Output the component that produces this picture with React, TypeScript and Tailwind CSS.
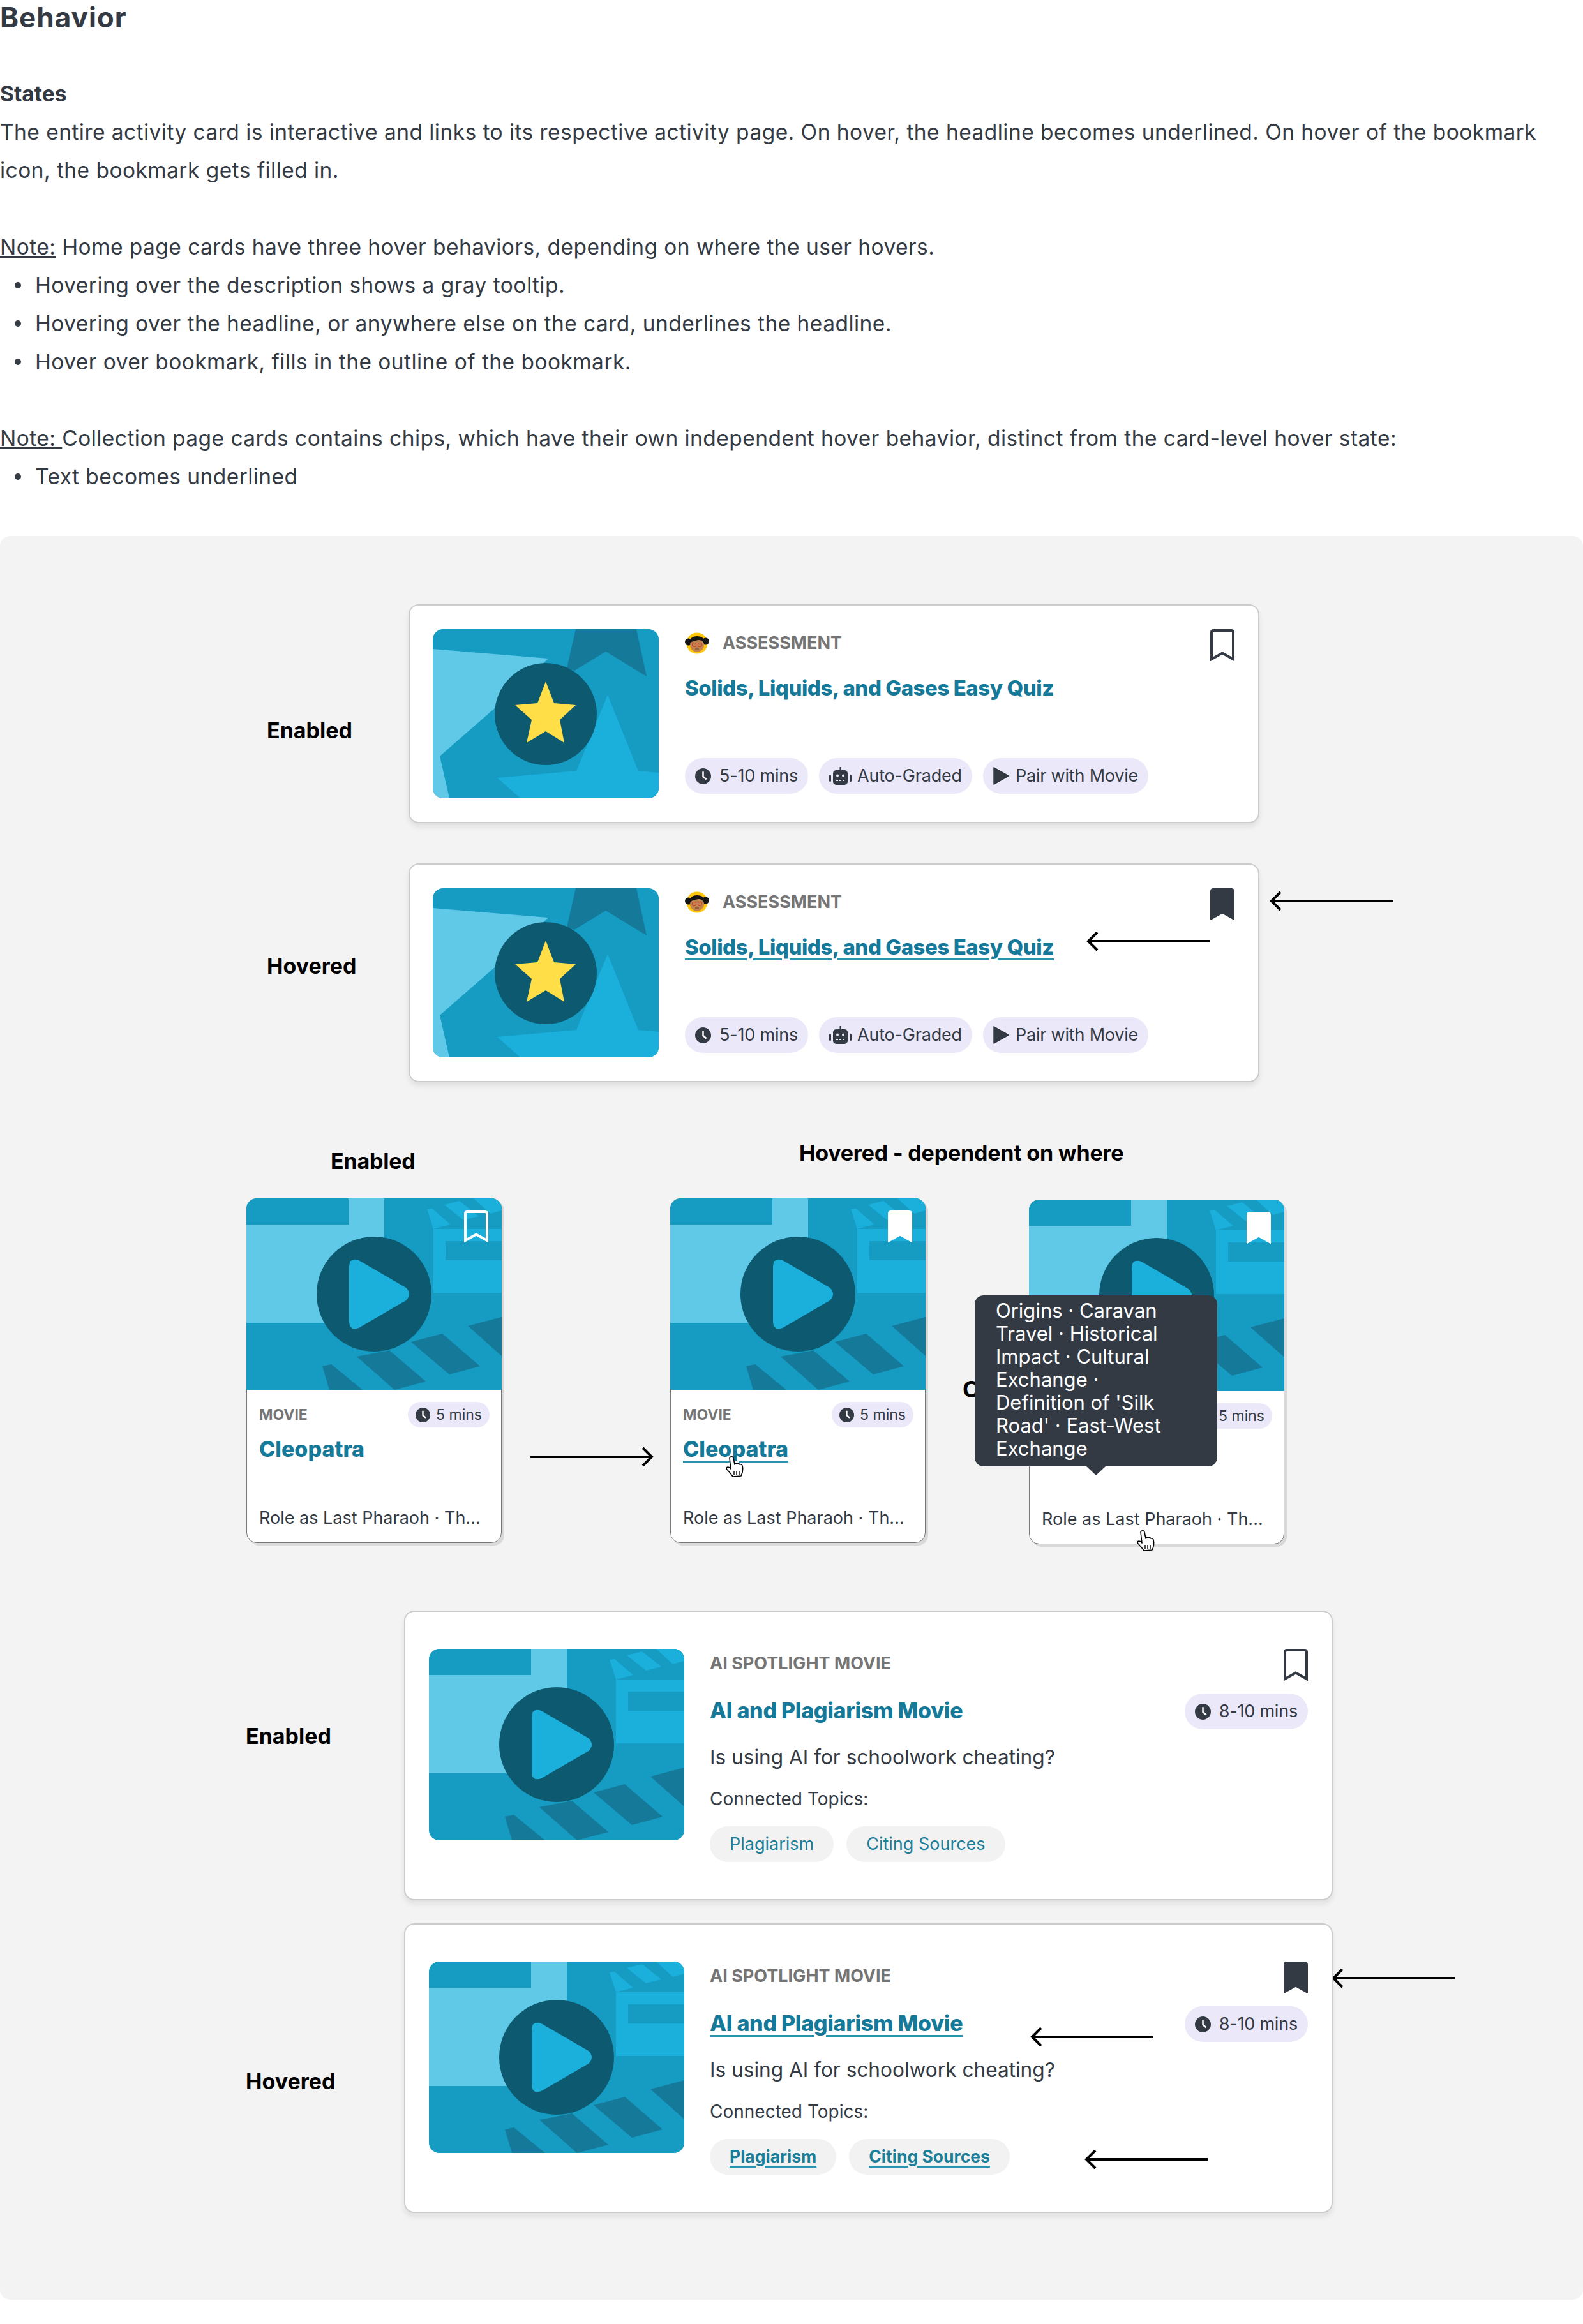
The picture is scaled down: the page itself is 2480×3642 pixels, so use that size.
import React from "react";

const dark = "#343a43";

function Bookmark({ color, filled, className }: { color: string; filled?: boolean; className?: string }) {
  return (
    <svg viewBox="0 0 38 50" className={className ?? "w-[38px] h-[50px]"}>
      <path
        d="M2 5 Q2 2 5 2 H33 Q36 2 36 5 V47 L19 37.5 L2 47 Z"
        fill={filled ? color : "none"}
        stroke={color}
        strokeWidth="4"
      />
    </svg>
  );
}

function Clock({ className }: { className?: string }) {
  return (
    <svg viewBox="0 0 24 24" className={className ?? "w-[25px] h-[25px]"}>
      <circle cx="12" cy="12" r="12" fill={dark} />
      <path d="M10.8 5 V13.2 L16.2 17.6 L17.8 15.6 L13.2 12 V5 Z" fill="#ffffff" />
    </svg>
  );
}

function Robot() {
  return (
    <svg viewBox="0 0 35 28" className="w-[35px] h-[28px]">
      <rect x="16.5" y="0" width="2.5" height="6" fill={dark} />
      <rect x="6" y="5" width="23" height="23" rx="5" fill={dark} />
      <rect x="0" y="12" width="3" height="11" rx="1.5" fill={dark} />
      <rect x="32" y="12" width="3" height="11" rx="1.5" fill={dark} />
      <circle cx="13" cy="13.5" r="2" fill="#ebe8fa" />
      <circle cx="22" cy="13.5" r="2" fill="#ebe8fa" />
      <rect x="11" y="20" width="3" height="2" fill="#ebe8fa" />
      <rect x="16" y="20" width="3" height="2" fill="#ebe8fa" />
      <rect x="21" y="20" width="3" height="2" fill="#ebe8fa" />
    </svg>
  );
}

function PlaySmall() {
  return (
    <svg viewBox="0 0 25 28" className="w-[25px] h-7">
      <path d="M1 1 L24 14 L1 27 Z" fill={dark} stroke={dark} strokeWidth="1.5" strokeLinejoin="round" />
    </svg>
  );
}

function Avatar() {
  return (
    <svg viewBox="0 0 38 34" className="w-[38px] h-[34px]">
      <circle cx="19" cy="17" r="16.5" fill="#ffc60a" />
      <circle cx="5.5" cy="15" r="5.5" fill="#141414" />
      <circle cx="32.5" cy="14" r="5.5" fill="#141414" />
      <ellipse cx="19" cy="20" rx="11" ry="10.5" fill="#c08350" />
      <path d="M7 18 Q7 6 19 6 Q31 6 31 17 Q25 10 17 13 Q10 14 7 18 Z" fill="#141414" />
      <circle cx="14.5" cy="19.5" r="3.3" fill="none" stroke="#d13f2b" strokeWidth="1" />
      <circle cx="23.5" cy="19.5" r="3.3" fill="none" stroke="#d13f2b" strokeWidth="1" />
      <path d="M16 26 H22" stroke="#6b3a1e" strokeWidth="1" />
    </svg>
  );
}

function Arrow({ className }: { className?: string }) {
  return (
    <svg viewBox="0 0 193 30" className={className ?? "w-[193px] h-[30px]"}>
      <path d="M193 15 H3 M17 1 L3 15 L17 29" fill="none" stroke="#000000" strokeWidth="4" />
    </svg>
  );
}

function Hand({ className }: { className: string }) {
  return (
    <svg viewBox="0 0 30 34" className={className}>
      <path
        d="M9 2 Q12 1 13 4 L15 14 Q17 11 19 13 Q21 11 23 14 Q26 13 27 16 Q29 24 25 32 L12 33 Q9 28 3 22 Q1 19 4 18 Q7 18 9 21 L7 4 Q7 3 9 2 Z"
        fill="#ffffff"
        stroke="#000000"
        strokeWidth="1.6"
        strokeLinejoin="round"
      />
      <path d="M14 24 V30 M18 24 V30 M22 24 V30" stroke="#000000" strokeWidth="1.4" />
    </svg>
  );
}

function StarThumb() {
  return (
    <svg viewBox="0 0 354 265" className="w-[354px] h-[265px] rounded-2xl shrink-0">
      <rect width="354" height="265" fill="#169bc2" />
      <polygon points="0,31 181,46 97,124 11,199 26,265 0,265" fill="#61c9e8" />
      <polygon points="224,0 319,0 335,74 271,35 222,65 210,61" fill="#15799a" />
      <polygon points="274,103 322,222 354,225 354,265 137,265 101,233 225,222" fill="#1bafdc" />
      <circle cx="177" cy="133" r="80" fill="#0d5a70" />
      <polygon
        points="177,82 190,116 224,119 199,142 206,178 177,160 147,178 155,142 129,119 164,116"
        fill="#ffde47"
      />
    </svg>
  );
}

function MovieThumb({ className }: { className: string }) {
  return (
    <svg viewBox="0 0 400 300" className={className}>
      <rect width="400" height="300" fill="#169bc2" />
      <polygon points="160,0 216,0 216,195 0,195 0,41 160,41" fill="#61c9e8" />
      <rect x="293" y="48" width="107" height="100" fill="#1bafdc" />
      <rect x="312" y="67" width="88" height="30" fill="#169bc2" />
      <polygon points="283,17 291,16 320,41 293,48" fill="#1bafdc" />
      <polygon points="310,10 334,4 364,28 340,34" fill="#1bafdc" />
      <polygon points="356,0 400,0 400,19 382,24" fill="#1bafdc" />
      <polygon points="119,263 133,260 182,300 130,300" fill="#15799a" />
      <polygon points="173,248 224,238 281,287 232,300" fill="#15799a" />
      <polygon points="258,225 307,212 366,263 318,276" fill="#15799a" />
      <polygon points="347,200 400,186 400,247" fill="#15799a" />
      <circle cx="200" cy="150" r="90" fill="#0d5a70" />
      <path
        d="M161 107 Q161 92 176 97 L250 140 Q260 150 250 160 L176 203 Q161 208 161 193 Z"
        fill="#1bafdc"
      />
    </svg>
  );
}

function Chip({ icon, label, gap }: { icon: React.ReactNode; label: string; gap: string }) {
  return (
    <div className={`h-14 rounded-full bg-[#ebe8fa] px-4 flex items-center text-[27px] tracking-[-0.2px] text-[#343a43] ${gap}`}>
      {icon}
      <span>{label}</span>
    </div>
  );
}

function AssessmentCard({ hovered }: { hovered?: boolean }) {
  return (
    <div className="relative w-[1333px] h-[343px] rounded-2xl bg-white border-2 border-[#cccccc] shadow-[0_6px_8px_rgba(0,0,0,0.08)] pl-[36px] pt-[37px] pr-[37px] flex gap-[41px]">
      <StarThumb />
      <div className="flex-1">
        <div className="h-[50px] flex justify-between items-start">
          <div className="flex items-center gap-[21px] h-[43px] text-[27px] font-bold text-[#757575]">
            <Avatar />
            <span className="pt-[2px]">ASSESSMENT</span>
          </div>
          <Bookmark color={dark} filled={hovered} />
        </div>
        <div
          className={`mt-5 h-11 leading-[44px] text-[33px] tracking-[-0.45px] font-extrabold text-[#15799a] ${
            hovered ? "underline decoration-[#2a93ad] decoration-[3px] underline-offset-[6px]" : ""
          }`}
        >
          Solids, Liquids, and Gases Easy Quiz
        </div>
        <div className="mt-[88px] flex gap-[17px]">
          <Chip icon={<Clock />} label="5-10 mins" gap="gap-[13px]" />
          <Chip icon={<Robot />} label="Auto-Graded" gap="gap-[9px]" />
          <Chip icon={<PlaySmall />} label="Pair with Movie" gap="gap-[10px]" />
        </div>
      </div>
      {hovered && <Arrow className="absolute left-[1060px] top-[105px] w-[193px] h-[30px]" />}
    </div>
  );
}

function MovieCard({ state }: { state: "enabled" | "title" | "tooltip" }) {
  return (
    <div className="relative w-[400px] h-[540px] rounded-2xl bg-white border-[1.5px] border-[#777777] shadow-[4px_4px_0_#d9d9d9]">
      <MovieThumb className="absolute -left-[1.5px] -top-[1.5px] w-[400px] h-[300px] rounded-t-2xl" />
      <div className="absolute right-[20px] top-[18px]">
        <Bookmark color="#ffffff" filled={state !== "enabled"} />
      </div>
      <div className="pt-[318px] pl-[19px] pr-[18px]">
        <div className="flex justify-between items-center h-10">
          <span className="text-[23px] font-bold text-[#757575]">MOVIE</span>
          <div className="h-10 rounded-full bg-[#ebe8fa] px-3 flex items-center gap-[9px] text-[23px] text-[#343a43]">
            <Clock className="w-[23px] h-[23px]" />
            <span>5 mins</span>
          </div>
        </div>
        <div
          className={`mt-[14px] h-10 leading-10 text-[34px] font-extrabold text-[#15799a] ${
            state === "title" ? "underline decoration-[#2a93ad] decoration-[3px] underline-offset-[6px]" : ""
          }`}
        >
          Cleopatra
        </div>
        <div className="mt-[70px] h-9 leading-9 text-[27px] text-[#343a43] whitespace-nowrap">
          Role as Last Pharaoh · Th...
        </div>
      </div>
      {state === "title" && <Hand className="absolute left-[85px] top-[402px] w-[30px] h-[34px]" />}
      {state === "tooltip" && (
        <>
          <span className="absolute -left-[105px] top-[276px] text-[36px] leading-10 font-bold text-black">O</span>
          <div className="absolute -left-[86px] top-[149px] w-[380px] h-[268px] rounded-[14px] bg-[#333a44] pl-[33px] pt-[6px] text-[31px] leading-[36px] text-white">
            Origins · Caravan
            <br />
            Travel · Historical
            <br />
            Impact · Cultural
            <br />
            Exchange ·
            <br />
            Definition of 'Silk
            <br />
            Road' · East-West
            <br />
            Exchange
            <div className="absolute left-[175px] -bottom-[14px] w-0 h-0 border-l-[15px] border-r-[15px] border-t-[14px] border-l-transparent border-r-transparent border-t-[#333a44]" />
          </div>
          <Hand className="absolute left-[167px] top-[516px] w-[30px] h-[34px]" />
        </>
      )}
    </div>
  );
}

function TopicChip({ label, hovered }: { label: string; hovered?: boolean }) {
  return (
    <div
      className={`h-14 rounded-full bg-[#f2f2f2] flex items-center text-[#1c7f9a] ${
        hovered
          ? "px-[31px] text-[26.5px] font-bold underline decoration-[3px] decoration-[#2a93ad] underline-offset-[5px]"
          : "px-[31px] text-[27px]"
      }`}
    >
      {label}
    </div>
  );
}

function SpotlightCard({ hovered }: { hovered?: boolean }) {
  return (
    <div className="relative w-[1455px] h-[454px] rounded-2xl bg-white border-2 border-[#cccccc] shadow-[0_6px_8px_rgba(0,0,0,0.08)] pl-[37px] pt-[58px] pr-[37px] flex gap-[40px]">
      <MovieThumb className="w-[400px] h-[300px] rounded-2xl shrink-0" />
      <div className="flex-1">
        <div className="h-[50px] flex justify-between items-start">
          <span className="text-[27px] leading-[46px] font-bold text-[#757575]">AI SPOTLIGHT MOVIE</span>
          <Bookmark color={dark} filled={hovered} />
        </div>
        <div className="mt-5 flex justify-between items-center">
          <span
            className={`-mt-[3px] text-[34px] tracking-[-0.3px] leading-[44px] font-extrabold text-[#15799a] ${
              hovered ? "underline decoration-[#2a93ad] decoration-[3px] underline-offset-[6px]" : ""
            }`}
          >
            AI and Plagiarism Movie
          </span>
          <Chip icon={<Clock />} label="8-10 mins" gap="gap-[13px]" />
        </div>
        <div className="mt-[22px] text-[31.6px] leading-[44px] text-[#343a43]">Is using AI for schoolwork cheating?</div>
        <div className="mt-[23px] text-[28px] leading-10 text-[#343a43]">Connected Topics:</div>
        <div className="mt-[23px] flex gap-5">
          <TopicChip label="Plagiarism" hovered={hovered} />
          <TopicChip label="Citing Sources" hovered={hovered} />
        </div>
      </div>
      {hovered && <Arrow className="absolute left-[979px] top-[161px] w-[193px] h-[30px]" />}
      {hovered && <Arrow className="absolute left-[1064px] top-[353px] w-[193px] h-[30px]" />}
    </div>
  );
}

function Bullet({ children }: { children: React.ReactNode }) {
  return (
    <li className="flex items-center">
      <span className="ml-[23px] mr-[22px] w-[10px] h-[10px] rounded-full bg-[#343a43]" />
      {children}
    </li>
  );
}

export default function App() {
  return (
    <div className="w-[2480px] h-[3642px] bg-white font-['Inter',sans-serif] text-[#343a43] overflow-hidden">
      <h1 className="h-[54px] text-[44px] tracking-[1px] leading-[54px] font-bold mb-[63px]">Behavior</h1>
      <div className="text-[33.5px] tracking-[0.45px] leading-[60px]">
        <div className="font-bold tracking-normal">States</div>
        <p>
          The entire activity card is interactive and links to its respective activity page. On hover, the headline
          becomes underlined. On hover of the bookmark
          <br />
          icon, the bookmark gets filled in.
        </p>
        <p className="mt-[60px]">
          <span className="underline">Note:</span> Home page cards have three hover behaviors, depending on where the
          user hovers.
        </p>
        <ul>
          <Bullet>Hovering over the description shows a gray tooltip.</Bullet>
          <Bullet>Hovering over the headline, or anywhere else on the card, underlines the headline.</Bullet>
          <Bullet>Hover over bookmark, fills in the outline of the bookmark.</Bullet>
        </ul>
        <p className="mt-[60px]">
          <span className="underline">Note: </span>Collection page cards contains chips, which have their own
          independent hover behavior, distinct from the card-level hover state:
        </p>
        <ul>
          <Bullet>Text becomes underlined</Bullet>
        </ul>
      </div>

      <div className="mt-[63px] h-[2764px] rounded-2xl bg-[#f3f3f3] pt-[107px] text-black">
        <div className="flex pl-[418px]">
          <div className="w-[222px] mt-[178px] text-[34px] leading-10 font-bold">Enabled</div>
          <AssessmentCard />
        </div>
        <div className="mt-[63px] flex pl-[418px]">
          <div className="w-[222px] mt-[141px] text-[34px] leading-10 font-bold">Hovered</div>
          <AssessmentCard hovered />
          <Arrow className="ml-4 mt-[44px] w-[193px] h-[30px]" />
        </div>

        <div className="mt-[91px] h-[91px] flex text-[34px] tracking-[-0.2px] leading-10 font-bold">
          <div className="ml-[518px] mt-[13px] w-[734px]">Enabled</div>
          <div>Hovered - dependent on where</div>
        </div>
        <div className="flex pl-[386px]">
          <MovieCard state="enabled" />
          <Arrow className="ml-[45px] mr-[26px] mt-[390px] w-[193px] h-[30px] rotate-180" />
          <MovieCard state="title" />
          <div className="ml-[162px] mt-[2px]">
            <MovieCard state="tooltip" />
          </div>
        </div>

        <div className="mt-[104px] flex pl-[385px]">
          <div className="w-[248px] mt-[177px] text-[34px] leading-10 font-bold">Enabled</div>
          <SpotlightCard />
        </div>
        <div className="mt-[36px] flex pl-[385px]">
          <div className="w-[248px] mt-[228px] text-[34px] leading-10 font-bold">Hovered</div>
          <SpotlightCard hovered />
          <Arrow className="-ml-[2px] mt-[71px] w-[193px] h-[30px]" />
        </div>
      </div>
    </div>
  );
}
